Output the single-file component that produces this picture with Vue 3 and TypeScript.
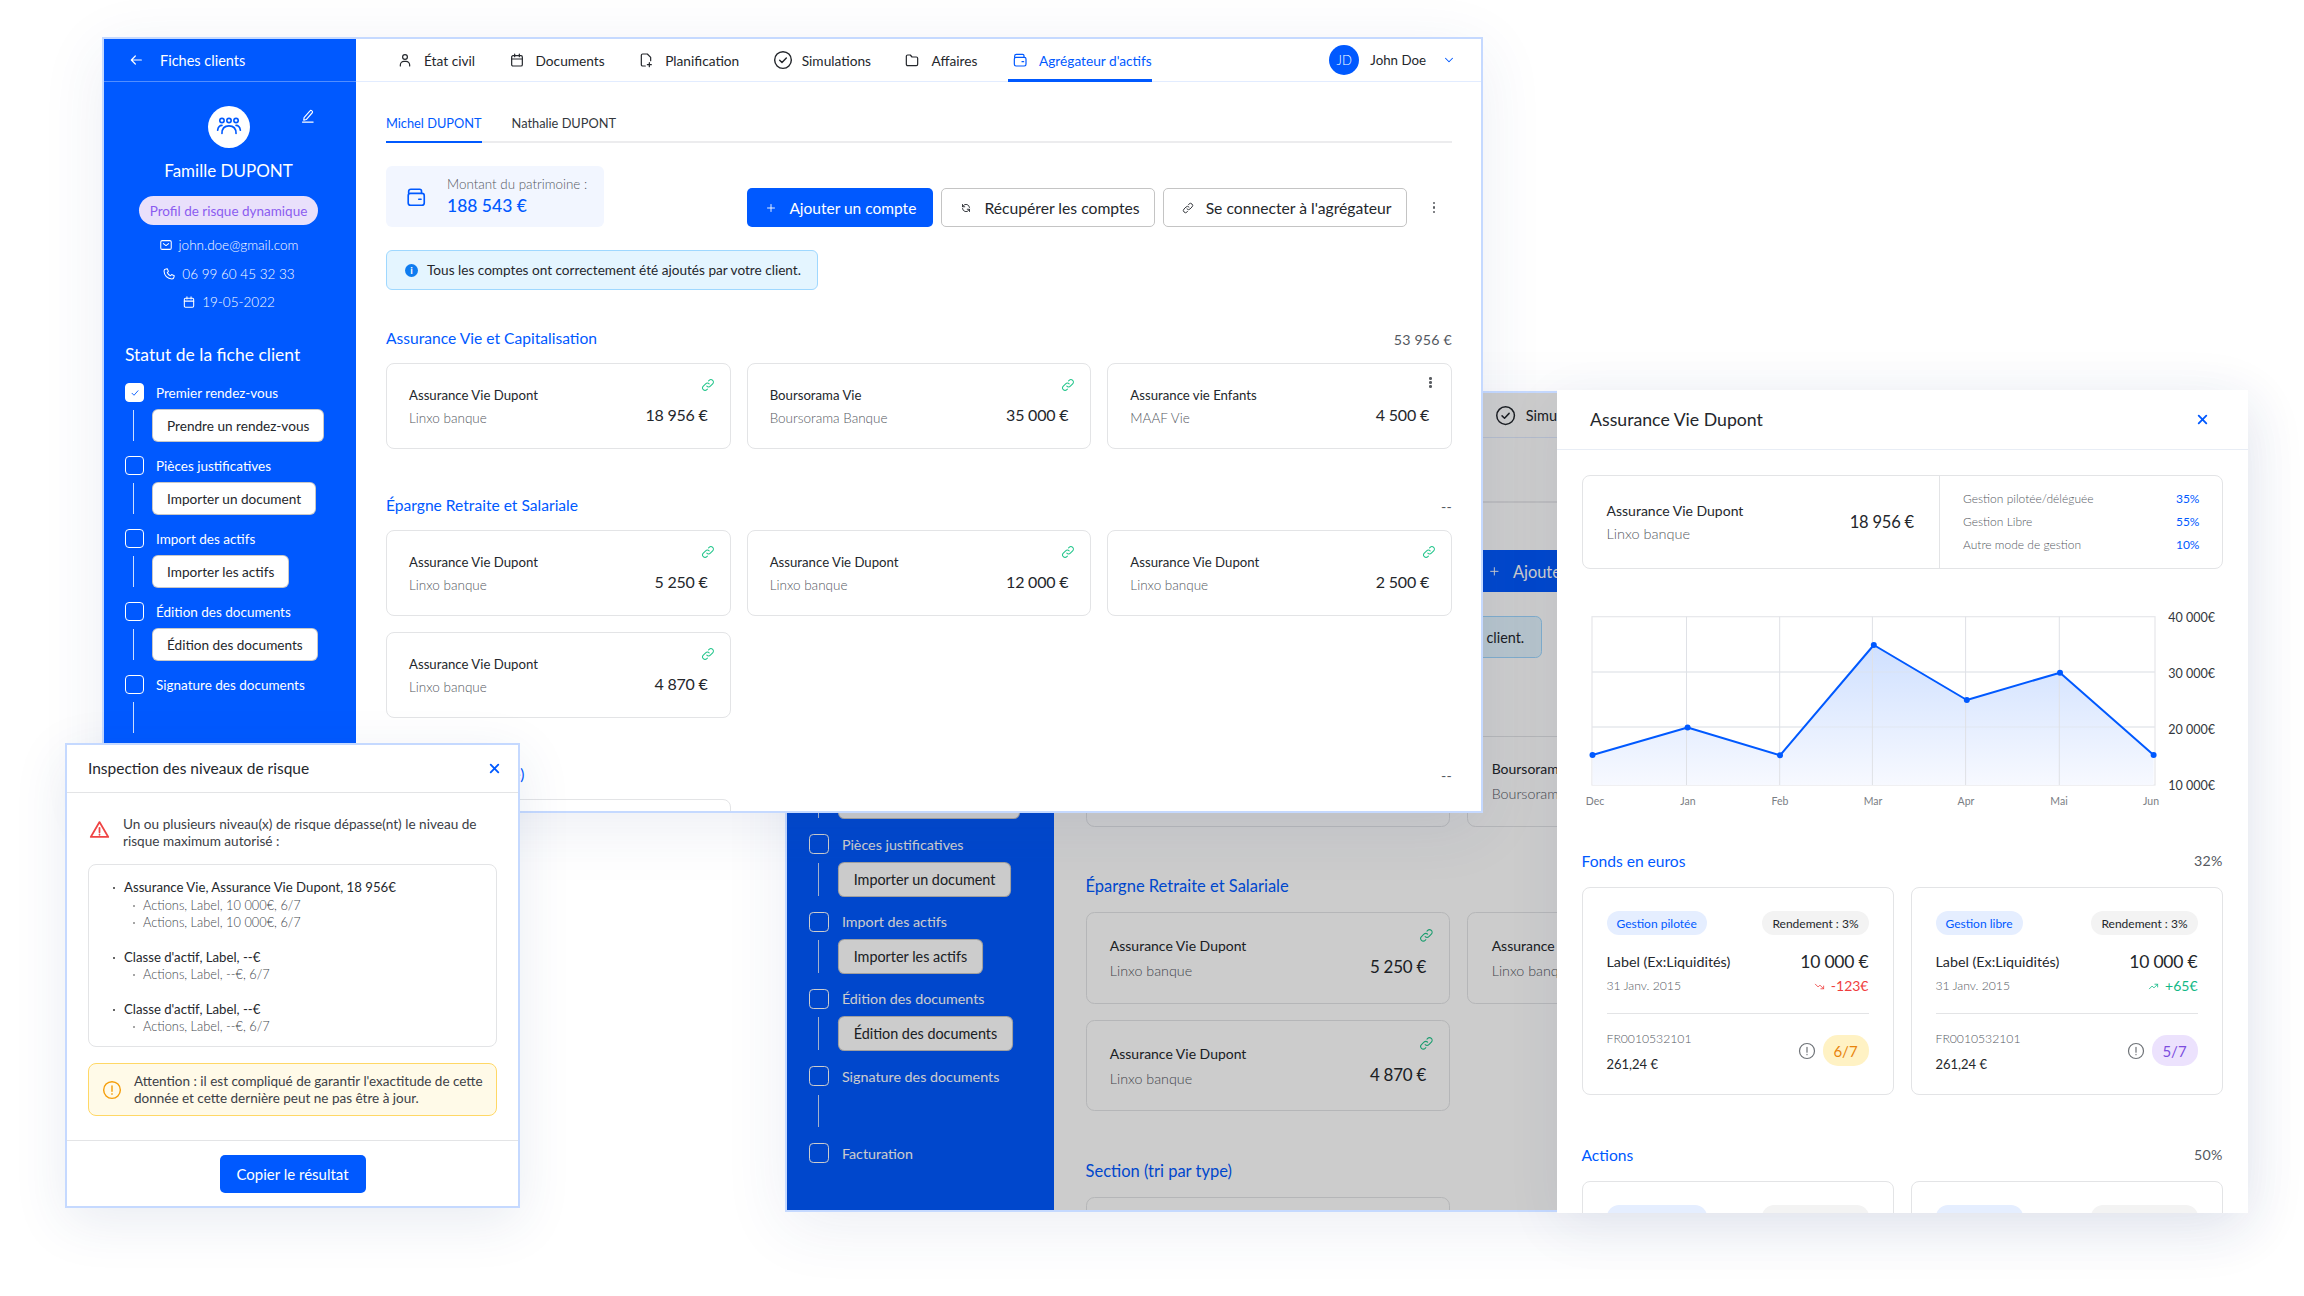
<script setup lang="ts">
interface Step { label: string; btn?: string; line?: boolean; checked?: boolean }
interface Account { name: string; bank: string; value: string; more?: boolean }
interface Section { title: string; total: string; cards: Account[] }

const windows: string[] = ['back', 'front']

const navItems = [
  { icon: 'i-user', label: 'État civil' },
  { icon: 'i-cal', label: 'Documents' },
  { icon: 'i-fileplus', label: 'Planification' },
  { icon: 'i-check-c', label: 'Simulations', big: true },
  { icon: 'i-folder', label: 'Affaires' },
  { icon: 'i-wallet', label: "Agrégateur d'actifs", active: true },
]

const steps: Step[] = [
  { label: 'Premier rendez-vous', btn: 'Prendre un rendez-vous', checked: true },
  { label: 'Pièces justificatives', btn: 'Importer un document' },
  { label: 'Import des actifs', btn: 'Importer les actifs' },
  { label: 'Édition des documents', btn: 'Édition des documents' },
  { label: 'Signature des documents', line: true },
  { label: 'Facturation' },
]

const dupont: Account = { name: 'Assurance Vie Dupont', bank: 'Linxo banque', value: '' }

const sections: Section[] = [
  {
    title: 'Assurance Vie et Capitalisation',
    total: '53 956 €',
    cards: [
      { ...dupont, value: '18 956 €' },
      { name: 'Boursorama Vie', bank: 'Boursorama Banque', value: '35 000 €' },
      { name: 'Assurance vie Enfants', bank: 'MAAF Vie', value: '4 500 €', more: true },
    ],
  },
  {
    title: 'Épargne Retraite et Salariale',
    total: '--',
    cards: [
      { ...dupont, value: '5 250 €' },
      { ...dupont, value: '12 000 €' },
      { ...dupont, value: '2 500 €' },
      { ...dupont, value: '4 870 €' },
    ],
  },
  {
    title: 'Section (tri par type)',
    total: '--',
    cards: [{ ...dupont, value: '5 250 €' }],
  },
]

const risks = [
  { head: 'Assurance Vie, Assurance Vie Dupont, 18 956€', subs: ['Actions, Label, 10 000€, 6/7', 'Actions, Label, 10 000€, 6/7'] },
  { head: "Classe d'actif, Label, --€", subs: ['Actions, Label, --€, 6/7'] },
  { head: "Classe d'actif, Label, --€", subs: ['Actions, Label, --€, 6/7'] },
]

const modes = [
  { label: 'Gestion pilotée/déléguée', pct: '35%' },
  { label: 'Gestion Libre', pct: '55%' },
  { label: 'Autre mode de gestion', pct: '10%' },
]

const funds = [
  { tag: 'Gestion pilotée', delta: '-123€', up: false, risk: '6/7', tone: 'amber' },
  { tag: 'Gestion libre', delta: '+65€', up: true, risk: '5/7', tone: 'violet' },
]

const fundSections = [
  { title: 'Fonds en euros', pct: '32%' },
  { title: 'Actions', pct: '50%' },
]

const points: [number, number][] = [
  [10.5, 145], [105.6, 117.5], [198, 145.3], [291.8, 35], [384.8, 90], [478, 62.7], [571.6, 145],
]
const linePts = points.map((p) => p.join(',')).join(' ')
const areaPts = `10.5,175 ${linePts} 571.6,175`
const vLines = [104.5, 197.7, 290.4, 383.6, 477.3]
const yLabels = [
  { t: '40 000€', y: 12 },
  { t: '30 000€', y: 68 },
  { t: '20 000€', y: 124 },
  { t: '10 000€', y: 180 },
]
const xLabels = [
  { t: 'Dec', x: 13 }, { t: 'Jan', x: 106 }, { t: 'Feb', x: 198 }, { t: 'Mar', x: 291 },
  { t: 'Apr', x: 384 }, { t: 'Mai', x: 477 }, { t: 'Jun', x: 569 },
]
</script>

<template>
  <div class="stage">
    <svg class="sprite" width="0" height="0" aria-hidden="true">
      <symbol id="i-arrow" viewBox="0 0 24 24"><path d="M20 12H5M11 6l-6 6 6 6" /></symbol>
      <symbol id="i-user" viewBox="0 0 24 24"><circle cx="12" cy="7.5" r="3.6" /><path d="M5 21v-1.5A5.5 5.5 0 0 1 10.500 14h3a5.500 5.500 0 0 1 5.500 5.500V21" /></symbol>
      <symbol id="i-cal" viewBox="0 0 24 24"><rect x="4" y="5.500" width="16" height="15.500" rx="2" /><path d="M4 10.500h16M8.500 3v4M15.500 3v4" /></symbol>
      <symbol id="i-fileplus" viewBox="0 0 24 24"><path d="M11 21H7a2 2 0 0 1-2-2V5a2 2 0 0 1 2-2h7l5 5v5" /><path d="M17 16v6M14 19h6" /></symbol>
      <symbol id="i-check-c" viewBox="0 0 24 24"><circle cx="12" cy="12" r="10" /><path d="M8 12.300l2.800 2.700L16 9.500" /></symbol>
      <symbol id="i-folder" viewBox="0 0 24 24"><path d="M3.500 6.500a2 2 0 0 1 2-2h4l2.500 3h6.500a2 2 0 0 1 2 2v9a2 2 0 0 1-2 2h-13a2 2 0 0 1-2-2z" /></symbol>
      <symbol id="i-wallet" viewBox="0 0 24 24"><path d="M4 8V6a2.500 2.500 0 0 1 2.500-2.500h9.500A2 2 0 0 1 18 5.500V8" /><rect x="3.500" y="8" width="17.500" height="13" rx="2.500" /><path d="M15 14.500h2.500" /></symbol>
      <symbol id="i-people" viewBox="0 0 24 24"><circle cx="5.500" cy="6" r="2" /><circle cx="12" cy="6" r="2" /><circle cx="18.500" cy="6" r="2" /><path d="M1.500 15c.5-3 2-4.500 4-4.500M22.500 15c-.5-3-2-4.500-4-4.500M5.500 18c0-4.500 2.500-7 6.500-7s6.500 2.500 6.500 7M12 11v0" /></symbol>
      <symbol id="i-pen" viewBox="0 0 24 24"><path d="M6.500 15.500 16 4.500a1.800 1.800 0 0 1 2.600-.2l.8.7a1.800 1.800 0 0 1 .2 2.600L10 18.500l-4 1z" /><path d="M4 22.500h17" /></symbol>
      <symbol id="i-mail" viewBox="0 0 24 24"><rect x="3" y="4.500" width="18" height="15" rx="2.500" /><path d="M7.500 9.500 12 13l4.500-3.500" /></symbol>
      <symbol id="i-phone" viewBox="0 0 24 24"><path d="M6.500 3.500 9 3l2 4.500-2 2c1 2.500 3 4.500 5.500 5.500l2-2L21 15l-.5 2.500c-.3 1.800-1.800 3-3.500 3C9.500 20.500 3.500 14.500 3.500 7c0-1.700 1.200-3.200 3-3.500z" /></symbol>
      <symbol id="i-refresh" viewBox="0 0 24 24"><path d="M19 11a7 7 0 0 0-12.500-3.500L5 9.500M5 13a7 7 0 0 0 12.500 3.500l1.500-2" /><path d="M5 5v4.500h4.500M19 19v-4.500h-4.500" /></symbol>
      <symbol id="i-link" viewBox="0 0 24 24"><path d="M10 14a4.200 4.200 0 0 0 6 0l4-4a4.240 4.240 0 0 0-6-6l-1 1" /><path d="M14 10a4.200 4.200 0 0 0-6 0l-4 4a4.240 4.240 0 0 0 6 6l1-1" /></symbol>
      <symbol id="i-warn" viewBox="0 0 24 24"><path d="M12 3.500 2 20.500h20zM12 10v5M12 17.600v.4" /></symbol>
      <symbol id="i-alert" viewBox="0 0 24 24"><circle cx="12" cy="12" r="10" /><path d="M12 7v6.500M12 16.500v.5" /></symbol>
      <symbol id="i-x" viewBox="0 0 24 24"><path d="M5 5l14 14M19 5 5 19" /></symbol>
      <symbol id="i-chev" viewBox="0 0 24 24"><path d="M6 9l6 6 6-6" /></symbol>
      <symbol id="i-plus" viewBox="0 0 24 24"><path d="M12 5v14M5 12h14" /></symbol>
      <symbol id="i-tick" viewBox="0 0 24 24"><path d="M6 12.500l4 4 8-9" /></symbol>
      <symbol id="i-down" viewBox="0 0 24 24"><path d="M3 7l6 6 4-4 8 8M21 11v6h-6" /></symbol>
      <symbol id="i-up" viewBox="0 0 24 24"><path d="M3 17l6-6 4 4 8-8M21 13V7h-6" /></symbol>
    </svg>

    <div v-for="win in windows" :key="win" class="app-slot" :class="win">
      <div class="app">
        <aside class="side">
          <div class="side-head">
            <svg class="ic ic-16"><use href="#i-arrow" /></svg>
            <span>Fiches clients</span>
          </div>
          <div class="profile">
            <div class="avatar"><svg class="ic ic-26"><use href="#i-people" /></svg></div>
            <svg class="ic ic-15 edit"><use href="#i-pen" /></svg>
            <div class="family">Famille DUPONT</div>
            <div class="risk-pill">Profil de risque dynamique</div>
            <div class="contact mail"><svg class="ic ic-14"><use href="#i-mail" /></svg>john.doe@gmail.com</div>
            <div class="contact"><svg class="ic ic-14"><use href="#i-phone" /></svg>06 99 60 45 32 33</div>
            <div class="contact"><svg class="ic ic-14"><use href="#i-cal" /></svg>19-05-2022</div>
          </div>
          <div class="status">
            <h3>Statut de la fiche client</h3>
            <div v-for="s in steps" :key="s.label" class="step">
              <div class="step-row">
                <span class="cb" :class="{ on: s.checked }">
                  <svg v-if="s.checked" class="ic ic-12"><use href="#i-tick" /></svg>
                </span>
                <span class="step-label">{{ s.label }}</span>
              </div>
              <div v-if="s.btn || s.line" class="step-sub">
                <span class="step-line"></span>
                <button v-if="s.btn" class="step-btn">{{ s.btn }}</button>
              </div>
            </div>
          </div>
        </aside>

        <div class="main">
          <header class="top">
            <nav class="nav">
              <div v-for="n in navItems" :key="n.label" class="nav-item" :class="{ active: n.active, big: n.big }">
                <svg class="ic" :class="n.big ? 'ic-20' : 'ic-16'"><use :href="'#' + n.icon" /></svg>
                <span>{{ n.label }}</span>
              </div>
            </nav>
            <div class="me">
              <span class="me-av">JD</span>
              <span class="me-name">John Doe</span>
              <svg class="ic ic-14 chev"><use href="#i-chev" /></svg>
            </div>
          </header>

          <div class="content">
            <div class="people-tabs">
              <span class="ptab active">Michel DUPONT</span>
              <span class="ptab">Nathalie DUPONT</span>
            </div>

            <div class="summary">
              <div class="asset">
                <svg class="ic ic-22 blue"><use href="#i-wallet" /></svg>
                <div>
                  <div class="asset-label">Montant du patrimoine :</div>
                  <div class="asset-value">188 543 €</div>
                </div>
              </div>
              <div class="actions">
                <button class="btn primary"><svg class="ic ic-12"><use href="#i-plus" /></svg>Ajouter un compte</button>
                <button class="btn ghost"><svg class="ic ic-12"><use href="#i-refresh" /></svg>Récupérer les comptes</button>
                <button class="btn ghost"><svg class="ic ic-12"><use href="#i-link" /></svg>Se connecter à l'agrégateur</button>
                <span class="kebab big"><i></i><i></i><i></i></span>
              </div>
            </div>

            <div class="notice">
              <span class="info-dot">i</span>
              Tous les comptes ont correctement été ajoutés par votre client.
            </div>

            <section v-for="sec in sections" :key="sec.title" class="sec">
              <div class="sec-head">
                <span class="sec-title">{{ sec.title }}</span>
                <span class="sec-total">{{ sec.total }}</span>
              </div>
              <div class="grid">
                <div v-for="(c, i) in sec.cards" :key="i" class="card">
                  <span v-if="c.more" class="kebab corner"><i></i><i></i><i></i></span>
                  <svg v-else class="ic ic-14 corner link"><use href="#i-link" /></svg>
                  <div>
                    <div class="card-name">{{ c.name }}</div>
                    <div class="card-bank">{{ c.bank }}</div>
                  </div>
                  <div class="card-value">{{ c.value }}</div>
                </div>
              </div>
            </section>
          </div>
        </div>
        <div v-if="win === 'back'" class="scrim"></div>
      </div>
    </div>

    <div class="dialog">
      <div class="dlg-head">
        <span>Inspection des niveaux de risque</span>
        <svg class="ic ic-13 blue x"><use href="#i-x" /></svg>
      </div>
      <div class="dlg-body">
        <div class="dlg-warn">
          <svg class="ic ic-21 red"><use href="#i-warn" /></svg>
          <p>Un ou plusieurs niveau(x) de risque dépasse(nt) le niveau de risque maximum autorisé :</p>
        </div>
        <div class="risk-box">
          <div v-for="(r, i) in risks" :key="i" class="risk-group">
            <div class="risk-head">{{ r.head }}</div>
            <div v-for="(sub, j) in r.subs" :key="j" class="risk-sub">{{ sub }}</div>
          </div>
        </div>
        <div class="caution">
          <svg class="ic ic-20 amber"><use href="#i-alert" /></svg>
          <p>Attention : il est compliqué de garantir l'exactitude de cette donnée et cette dernière peut ne pas être à jour.</p>
        </div>
      </div>
      <div class="dlg-foot"><button class="btn primary copy">Copier le résultat</button></div>
    </div>

    <div class="panel">
      <div class="panel-head">
        <span>Assurance Vie Dupont</span>
        <svg class="ic ic-13 blue x"><use href="#i-x" /></svg>
      </div>
      <div class="panel-body">
        <div class="overview">
          <div class="ov-left">
            <div>
              <div class="card-name">Assurance Vie Dupont</div>
              <div class="card-bank">Linxo banque</div>
            </div>
            <div class="card-value ov-value">18 956 €</div>
          </div>
          <div class="ov-right">
            <div v-for="m in modes" :key="m.label" class="mode">
              <span>{{ m.label }}</span><b>{{ m.pct }}</b>
            </div>
          </div>
        </div>

        <svg class="chart" width="641" height="200" viewBox="0 0 641 200">
          <defs>
            <linearGradient id="areaFill" x1="0" y1="0" x2="0" y2="1">
              <stop offset="0" stop-color="#cfe0ff" />
              <stop offset="1" stop-color="#f7f9ff" />
            </linearGradient>
          </defs>
          <rect x="10" y="6.700" width="563" height="168.300" fill="#fff" stroke="#e6e7ea" stroke-width="1.200" />
          <line v-for="y in [62, 117]" :key="y" x1="10" x2="573" :y1="y" :y2="y" stroke="#e8e9eb" stroke-width="1.200" />
          <polygon :points="areaPts" fill="url(#areaFill)" />
          <line v-for="x in vLines" :key="x" :x1="x" :x2="x" y1="6.700" y2="175" stroke="#dfe1e6" stroke-width="1" />
          <line v-for="y in [62, 117]" :key="'g' + y" x1="10" x2="573" :y1="y" :y2="y" stroke="#dfe3ea" stroke-opacity=".6" stroke-width="1.200" />
          <polyline :points="linePts" fill="none" stroke="#0059ff" stroke-width="2" stroke-linejoin="round" />
          <circle v-for="p in points" :key="p[0]" :cx="p[0]" :cy="p[1]" r="3" fill="#0059ff" />
          <text v-for="l in yLabels" :key="l.t" class="y-label" x="633" :y="l.y">{{ l.t }}</text>
          <text v-for="l in xLabels" :key="l.t" class="x-label" :x="l.x" y="195">{{ l.t }}</text>
        </svg>

        <section v-for="fs in fundSections" :key="fs.title" class="fsec">
          <div class="sec-head">
            <span class="sec-title">{{ fs.title }}</span>
            <span class="sec-total">{{ fs.pct }}</span>
          </div>
          <div class="fgrid">
            <div v-for="f in funds" :key="f.tag" class="fund">
              <div class="f-row">
                <span class="tag tag-blue">{{ f.tag }}</span>
                <span class="tag tag-grey">Rendement : 3%</span>
              </div>
              <div class="f-row f-mid">
                <div>
                  <div class="f-label">Label (Ex:Liquidités)</div>
                  <div class="f-date">31 Janv. 2015</div>
                </div>
                <div class="f-right">
                  <div class="f-value">10 000 €</div>
                  <div class="f-delta" :class="f.up ? 'up' : 'down'">
                    <svg class="ic ic-11"><use :href="f.up ? '#i-up' : '#i-down'" /></svg>{{ f.delta }}
                  </div>
                </div>
              </div>
              <div class="f-row f-bot">
                <div>
                  <div class="f-date">FR0010532101</div>
                  <div class="f-price">261,24 €</div>
                </div>
                <div class="f-risk">
                  <svg class="ic ic-18 grey"><use href="#i-alert" /></svg>
                  <span class="badge" :class="f.tone">{{ f.risk }}</span>
                </div>
              </div>
            </div>
          </div>
        </section>
      </div>
    </div>
  </div>
</template>

<style>
html, body { margin: 0; background: #fff; }
</style>

<style scoped>
.stage {
  position: relative;
  width: 2304px;
  height: 1296px;
  overflow: hidden;
  background: #fff;
  font-family: "Lato", "Liberation Sans", sans-serif;
  color: #24272c;
  font-size: 13.5px;
}
.sprite { position: absolute; }
.ic {
  fill: none;
  stroke: currentColor;
  stroke-width: 1.8;
  stroke-linecap: round;
  stroke-linejoin: round;
  flex: none;
}
.ic-11 { width: 11px; height: 11px; }
.ic-12 { width: 12px; height: 12px; }
.ic-13 { width: 13px; height: 13px; stroke-width: 3.4; }
.ic-14 { width: 14px; height: 14px; }
.ic-15 { width: 15px; height: 15px; }
.ic-16 { width: 16px; height: 16px; }
.ic-18 { width: 18px; height: 18px; stroke-width: 1.6; }
.ic-20 { width: 20px; height: 20px; stroke-width: 1.7; }
.ic-21 { width: 21px; height: 21px; stroke-width: 2; }
.ic-22 { width: 22px; height: 22px; }
.ic-26 { width: 26px; height: 26px; stroke-width: 1.5; }
.blue { color: #0059ff; }
.red { color: #ef4444; }
.amber { color: #f59e0b; }
.grey { color: #6f7378; }

.app-slot { position: absolute; }
.app-slot.front { left: 102px; top: 37px; z-index: 2; box-shadow: 0 14px 60px rgba(40, 70, 130, .09); }
.app-slot.back { left: 785px; top: 391px; z-index: 1; box-shadow: 0 14px 60px rgba(40, 70, 130, .09); }
.back .app { zoom: 1.0587; }
.app {
  position: relative;
  display: flex;
  box-sizing: content-box;
  width: 1377px;
  height: 772px;
  border: 2px solid #c5d9ff;
  background: #fff;
  overflow: hidden;
}
.scrim { position: absolute; inset: 0; background: rgba(0, 0, 0, .2); }

.side { width: 252px; flex: none; background: #0059ff; color: #fff; }
.side-head {
  height: 42px;
  display: flex;
  align-items: center;
  gap: 16px;
  padding-left: 24px;
  border-bottom: 1px solid rgba(255, 255, 255, .32);
  font-size: 14.5px;
}
.profile { position: relative; display: flex; flex-direction: column; align-items: center; padding: 24px 3px 0 0; }
.avatar {
  width: 42px; height: 42px; border-radius: 50%;
  background: #fff; color: #0059ff;
  display: flex; align-items: center; justify-content: center;
}
.edit { position: absolute; left: 196px; top: 26px; }
.family { margin-top: 12px; font-size: 17px; line-height: 22px; }
.risk-pill {
  margin-top: 14px; height: 29px; padding: 0 11px; border-radius: 15px;
  background: #e9e0fb; color: #8b5cf0;
  display: flex; align-items: center; font-size: 13.5px;
}
.contact {
  margin-top: 8.500px; height: 20px; display: flex; align-items: center; gap: 6px;
  font-size: 13.5px; font-weight: 300;
}
.mail { margin-top: 10px; }
.status { padding: 32px 21px 0; }
.status h3 { margin: 0 0 17px; font-size: 17.500px; line-height: 22px; font-weight: 400; }
.step-row { display: flex; align-items: center; height: 19px; gap: 12px; }
.cb {
  width: 17px; height: 17px; border: 1px solid #fff; border-radius: 4px;
  display: flex; align-items: center; justify-content: center;
  flex: none;
}
.cb.on { background: #fff; color: #0059ff; }
.step-label { font-size: 13.5px; }
.step-sub { display: flex; align-items: stretch; height: 31px; margin: 8px 0 15px 8px; gap: 19px; }
.step-line { width: 1px; background: rgba(255, 255, 255, .8); }
.step-btn {
  padding: 0 14px; border: 0; border-radius: 5px; background: #fff;
  box-shadow: 0 0 0 1px #c8c8c8;
  font: inherit; font-size: 13.6px; color: #24272c;
}

.main { flex: 1; min-width: 0; display: flex; flex-direction: column; }
.top {
  height: 42px; flex: none; display: flex; align-items: stretch; justify-content: space-between;
  border-bottom: 1px solid #e2ecff; padding: 0 0 0 41px;
}
.nav { display: flex; gap: 33.500px; }
.nav-item {
  display: flex; align-items: center; gap: 11px; font-size: 13.7px;
  margin-bottom: -1px; border-bottom: 3px solid transparent; padding-top: 2px;
}
.nav-item.big { gap: 9px; }
.nav-item.active { color: #0059ff; border-bottom-color: #0059ff; padding-left: 4px; margin-left: -3px; }
.me { display: flex; align-items: center; padding-right: 25px; }
.me-av {
  width: 30px; height: 30px; border-radius: 50%; background: #0059ff; color: #fff;
  display: flex; align-items: center; justify-content: center; font-size: 13px; font-weight: 300;
}
.me-name { margin-left: 11px; font-size: 13.3px; }
.chev { margin-left: 16px; color: #0059ff; }

.content { padding: 0 29px 0 30px; flex: 1; min-height: 0; overflow: hidden; }
.people-tabs { display: flex; gap: 30px; padding-top: 32px; border-bottom: 2px solid #ececee; }
.ptab { font-size: 12.8px; line-height: 18px; padding-bottom: 9px; margin-bottom: -2px; border-bottom: 2px solid transparent; color: #33373d; }
.ptab.active { color: #0059ff; border-bottom-color: #0059ff; }

.summary { display: flex; justify-content: space-between; align-items: flex-end; margin-top: 23px; }
.asset {
  width: 218px; height: 61px; box-sizing: border-box; background: #f2f6ff; border-radius: 6px;
  display: flex; align-items: center; gap: 20px; padding-left: 19px;
}
.asset-label { font-size: 13.4px; line-height: 18px; font-weight: 300; color: #55595f; }
.asset-value { font-size: 17.500px; line-height: 25px; color: #0059ff; font-weight: 500; }
.actions { display: flex; align-items: center; gap: 8px; }
.btn {
  height: 39px; box-sizing: border-box; border-radius: 5px; font: inherit; font-size: 15.500px;
  display: flex; align-items: center; gap: 12px; color: #24272c;
}
.btn.primary { width: 186px; background: #0059ff; color: #fff; border: 0; padding-left: 18px; }
.btn.ghost { background: #fff; border: 1px solid #c4c4c4; padding: 0 14px 0 18px; font-size: 15.7px; }
.kebab { display: inline-flex; flex-direction: column; gap: 2px; align-items: center; }
.kebab i { width: 2.500px; height: 2.500px; border-radius: 50%; background: #5a5d62; }
.kebab.big { margin-left: 18px; margin-right: 17px; }
.notice {
  display: inline-flex; align-items: center; gap: 9px; margin-top: 23px;
  height: 40px; box-sizing: border-box; padding: 0 16px 0 18px;
  background: #e4f5ff; border: 1px solid #9fd8ff; border-radius: 6px; font-size: 13.6px;
}
.info-dot {
  width: 13px; height: 13px; border-radius: 50%; background: #0f7cf0; color: #fff;
  font-size: 10px; font-weight: 700; text-align: center; line-height: 13px;
}
.sec { margin-top: 47px; }
.notice + .sec { margin-top: 39px; }
.sec-head { display: flex; justify-content: space-between; height: 20px; align-items: center; }
.sec-title { font-size: 15.6px; color: #0059ff; line-height: 19px; margin-bottom: 1px; }
.sec-total { font-size: 14.2px; color: #55595f; letter-spacing: .2px; }
.fsec .sec-title { margin-bottom: 0; }
.fsec .sec-total { margin-bottom: 1px; }
.grid { display: grid; grid-template-columns: repeat(3, 1fr); gap: 16px; margin-top: 14px; }
.card {
  position: relative; height: 86px; box-sizing: border-box; border: 1px solid #e3e4e6; border-radius: 8px;
  display: flex; align-items: center; justify-content: space-between; padding: 0 22px;
}
.card-name { font-size: 13.2px; line-height: 20px; }
.card-bank { font-size: 13.5px; line-height: 20px; margin-top: 3px; font-weight: 300; color: #55595f; }
.card-value { font-size: 16px; margin-top: 16px; letter-spacing: -.2px; }
.corner { position: absolute; right: 15px; top: 14px; }
.kebab.corner { top: 13px; right: 19px; gap: 1.500px; }
.link { color: #22c58b; }

.dialog {
  position: absolute; z-index: 3; left: 65px; top: 743px; width: 451px; height: 461px;
  border: 2px solid #c5d9ff; background: #fff; display: flex; flex-direction: column;
  box-shadow: 0 14px 50px rgba(40, 70, 130, .10);
}
.dlg-head {
  height: 47px; flex: none; display: flex; align-items: center; justify-content: space-between;
  padding: 0 17px 0 21px; border-bottom: 1px solid #e3e4e6; font-size: 15.5px;
}
.dlg-head span { margin-top: -2px; }
.x { stroke-width: 3.4; }
.dlg-body { flex: 1; padding: 23px 21px 0; }
.dlg-warn { display: flex; gap: 13px; align-items: flex-start; padding-left: 1px; }
.dlg-warn p { margin: 0; line-height: 17px; font-size: 13.6px; width: 370px; color: #3c4046; }
.dlg-warn .ic { margin-top: 3px; }
.risk-box {
  margin-top: 14px; height: 183px; box-sizing: border-box; border: 1px solid #e3e4e6; border-radius: 8px;
  padding: 14px 0 0 24px;
}
.risk-group { margin-bottom: 17px; line-height: 17.5px; }
.risk-head { position: relative; padding-left: 11px; font-size: 13.2px; }
.risk-head::before { content: ""; position: absolute; left: 0; top: 8px; width: 2px; height: 2px; background: #333; border-radius: 50%; }
.risk-sub { position: relative; padding-left: 30px; font-size: 12.8px; font-weight: 300; color: #44484e; }
.risk-sub::before { content: ""; position: absolute; left: 20px; top: 8px; width: 2px; height: 2px; background: #888; border-radius: 50%; }
.caution {
  margin-top: 16px; height: 53px; box-sizing: border-box; display: flex; align-items: center; gap: 12px;
  padding-left: 13px; background: #fffae8; border: 1px solid #ffd866; border-radius: 8px;
}
.caution p { margin: 0; line-height: 17px; font-size: 13.5px; width: 362px; color: #3c4046; }
.dlg-foot {
  height: 66px; flex: none; border-top: 1px solid #e3e4e6; display: flex; align-items: center; justify-content: center;
  padding-top: 1px; box-sizing: border-box;
}
.btn.copy { width: 146px; height: 38px; padding: 0; justify-content: center; font-size: 15px; }

.panel {
  position: absolute; z-index: 3; left: 1557px; top: 390px; width: 691px; height: 823px; overflow: hidden;
  background: #fff; box-shadow: 0 14px 50px rgba(40, 70, 130, .08);
}
.panel-head {
  height: 59px; display: flex; align-items: center; justify-content: space-between;
  padding: 0 39px 0 33px; border-bottom: 1px solid #e8edf5; font-size: 17.700px;
}
.panel-body { padding: 25px 25.5px 0 24.5px; }
.overview {
  height: 94px; box-sizing: border-box; border: 1px solid #e3e4e6; border-radius: 8px; display: flex;
}
.ov-left {
  width: 357.5px; box-sizing: border-box; border-right: 1px solid #e3e4e6;
  display: flex; justify-content: space-between; align-items: center; padding: 0 25px 0 24px;
}
.ov-left .card-name { font-size: 14px; }
.ov-left .card-bank { font-size: 14.5px; }
.ov-value { margin-top: 0; font-size: 16.5px; }
.ov-right { flex: 1; padding: 0 22px 0 23px; display: flex; flex-direction: column; justify-content: center; gap: 5px; }
.mode { display: flex; justify-content: space-between; font-size: 12px; line-height: 18px; font-weight: 300; color: #55595f; }
.mode b { font-weight: 400; color: #0059ff; }
.chart { display: block; margin-top: 41px; }
.y-label { font-size: 12.500px; text-anchor: end; fill: #33373d; font-family: "Lato", sans-serif; }
.x-label { font-size: 10.500px; text-anchor: middle; fill: #7a7e84; font-family: "Lato", sans-serif; }
.fsec { margin-top: 41px; }
.fsec + .fsec { margin-top: 50px; }
.fgrid { display: grid; grid-template-columns: 1fr 1fr; gap: 17px; margin-top: 16px; }
.fund {
  height: 208px; box-sizing: border-box; border: 1px solid #e3e4e6; border-radius: 8px; padding: 23px 24px 0;
}
.f-row { display: flex; justify-content: space-between; }
.tag { height: 24px; border-radius: 12px; padding: 0 10px; display: flex; align-items: center; font-size: 12px; }
.tag-blue { background: #e5eeff; color: #0059ff; }
.tag-grey { background: #f3f3f3; }
.f-mid { margin-top: 17px; border-bottom: 1px solid #e3e4e6; height: 61px; }
.f-label { font-size: 14.3px; line-height: 20px; }
.f-date { font-size: 12.2px; line-height: 20px; margin-top: 4px; font-weight: 300; color: #55595f; }
.f-right { text-align: right; margin-top: -3px; }
.f-value { font-size: 17.500px; line-height: 26px; letter-spacing: -.2px; }
.f-delta { display: flex; align-items: center; justify-content: flex-end; gap: 6px; font-size: 14px; line-height: 20px; margin-top: 1px; }
.f-delta.up { color: #12b886; }
.f-delta.down { color: #f03e3e; }
.f-bot { margin-top: 11px; align-items: flex-start; }
.f-bot .f-date { margin-top: 4px; }
.f-price { font-size: 13px; line-height: 20px; margin-top: 5px; }
.f-risk { display: flex; align-items: center; gap: 7px; margin-top: 10px; }
.badge { width: 46px; height: 31px; border-radius: 15px; display: flex; align-items: center; justify-content: center; font-size: 15px; }
.badge.amber { background: #fff2c4; color: #e8840c; }
.badge.violet { background: #ece2fd; color: #7c4ddf; }
</style>
